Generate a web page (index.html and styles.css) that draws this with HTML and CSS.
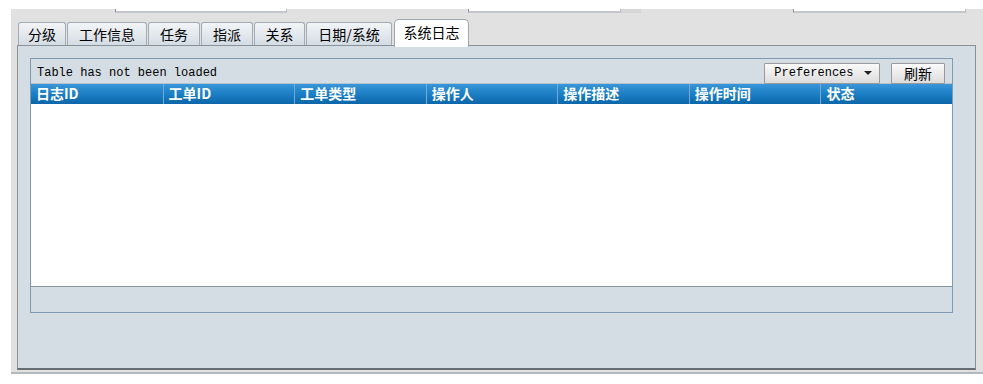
FILE: index.html
```html
<!DOCTYPE html>
<html lang="zh-CN">

<head>
    <meta charset="UTF-8">
    <title>系统日志</title>
    <link rel="stylesheet" href="styles.css">
</head>

<body>
    <div class="frame">
        <!-- bottom edge of the form fields above, cut off by the view -->
        <div class="fields">
            <div class="field field-a"></div>
            <div class="label-gap"></div>
            <div class="field field-b"></div>
            <div class="field-btn"></div>
            <div class="field field-c"></div>
        </div>

        <div class="tabs">
            <div class="tab w48">分级</div>
            <div class="tab w80">工作信息</div>
            <div class="tab w52">任务</div>
            <div class="tab w52">指派</div>
            <div class="tab w51">关系</div>
            <div class="tab w86">日期/系统</div>
            <div class="tab active">系统日志</div>
        </div>

        <div class="panel">
            <div class="grid-box">
                <div class="toolbar">
                    <span class="status">Table has not been loaded</span>
                    <div class="actions">
                        <button class="btn btn-pref">Preferences <span class="caret"></span></button>
                        <button class="btn btn-refresh">刷新</button>
                    </div>
                </div>
                <div class="head">
                    <div>日志ID</div>
                    <div>工单ID</div>
                    <div>工单类型</div>
                    <div>操作人</div>
                    <div>操作描述</div>
                    <div>操作时间</div>
                    <div>状态</div>
                </div>
                <div class="rows"></div>
                <div class="foot"></div>
            </div>
        </div>
    </div>
</body>

</html>
```

FILE: styles.css
```css
* {
    margin: 0;
    padding: 0;
    box-sizing: border-box;
}

body {
    background-color: #fff;
    font-family: "Noto Sans CJK SC", "Liberation Sans", sans-serif;
    width: 983px;
    height: 384px;
    overflow: hidden;
}

.frame {
    margin: 9px 0 0 11px;
    height: 365px;
    background-color: #e0e1e0;
    border-bottom: 2px solid #b3babd;
    display: flex;
    flex-direction: column;
}

.fields {
    height: 4px;
    display: flex;
}

.field {
    height: 4px;
    background-color: #fff;
    border-left: 1px solid #8d8d8d;
    border-right: 1px solid #b8b8b8;
    border-bottom: 2px solid #c2c6ca;
}

.field-a {
    margin-left: 104px;
    width: 172px;
}

.label-gap {
    width: 181px;
}

.field-b {
    width: 153px;
}

.field-btn {
    width: 20px;
    height: 4px;
    background-color: #d6d6d6;
}

.field-c {
    margin-left: 152px;
    width: 173px;
}

.tabs {
    display: flex;
    align-items: flex-end;
    gap: 1px;
    margin-top: 6px;
    padding-left: 7px;
    height: 26px;
    position: relative;
    z-index: 1;
}

.tab {
    height: 23px;
    font-size: 14px;
    line-height: 22px;
    text-align: center;
    color: #000;
    background: linear-gradient(#f3f5f7, #d3dce4);
    border: 1px solid #a3acb4;
    border-bottom: none;
    border-radius: 3px 3px 0 0;
}

.w48 { width: 48px; }
.w80 { width: 80px; }
.w52 { width: 52px; }
.w51 { width: 51px; }
.w86 { width: 86px; }

.tab.active {
    width: 75px;
    height: 28px;
    margin-left: 1px;
    margin-bottom: -2px;
    line-height: 24px;
    background: #fff;
    border-color: #9ca6ae;
    border-radius: 5px 5px 0 0;
}

.panel {
    margin: 0 7px 2px 6px;
    flex: 1;
    background-color: #d4dde4;
    border: 1px solid #8a9298;
    border-bottom: 2px solid #676e73;
    padding: 12px 22px 0 12px;
}

.grid-box {
    border: 1px solid #7f9bb3;
    background-color: #fff;
}

.toolbar {
    height: 25px;
    background-color: #d4dde4;
    border-bottom: 1px solid #b6c3cd;
    display: flex;
    justify-content: space-between;
    align-items: center;
    padding: 0 7px 0 6px;
}

.status {
    font-family: "Liberation Mono", monospace;
    font-size: 12px;
    color: #000;
    padding-top: 3px;
}

.actions {
    display: flex;
    gap: 11px;
    padding-top: 4px;
}

.btn {
    height: 21px;
    border: 1px solid #9a9a9a;
    background: linear-gradient(#fafafa, #dcdcdc);
    color: #000;
    border-radius: 1px;
}

.btn-pref {
    width: 116px;
    font-family: "Liberation Mono", monospace;
    font-size: 12px;
    padding-left: 2px;
}

.caret {
    display: inline-block;
    width: 0;
    height: 0;
    border-left: 4px solid transparent;
    border-right: 4px solid transparent;
    border-top: 4px solid #222;
    margin-left: 3px;
    vertical-align: middle;
}

.btn-refresh {
    width: 54px;
    font-size: 14px;
    font-family: "Noto Sans CJK SC", sans-serif;
    line-height: 17px;
}

.head {
    height: 20px;
    display: grid;
    grid-template-columns: repeat(7, 1fr);
    background: linear-gradient(#3896d9, #1a7cc2 55%, #0c66a9);
}

.head>div {
    color: #fff;
    font-size: 14px;
    font-weight: bold;
    line-height: 19px;
    padding-left: 5px;
    border-left: 1px solid #77a9d2;
}

.head>div:first-child {
    border-left: none;
}

.rows {
    height: 182px;
    background-color: #fff;
}

.foot {
    height: 26px;
    background-color: #d4dde4;
    border-top: 1px solid #7e93a4;
}
```
